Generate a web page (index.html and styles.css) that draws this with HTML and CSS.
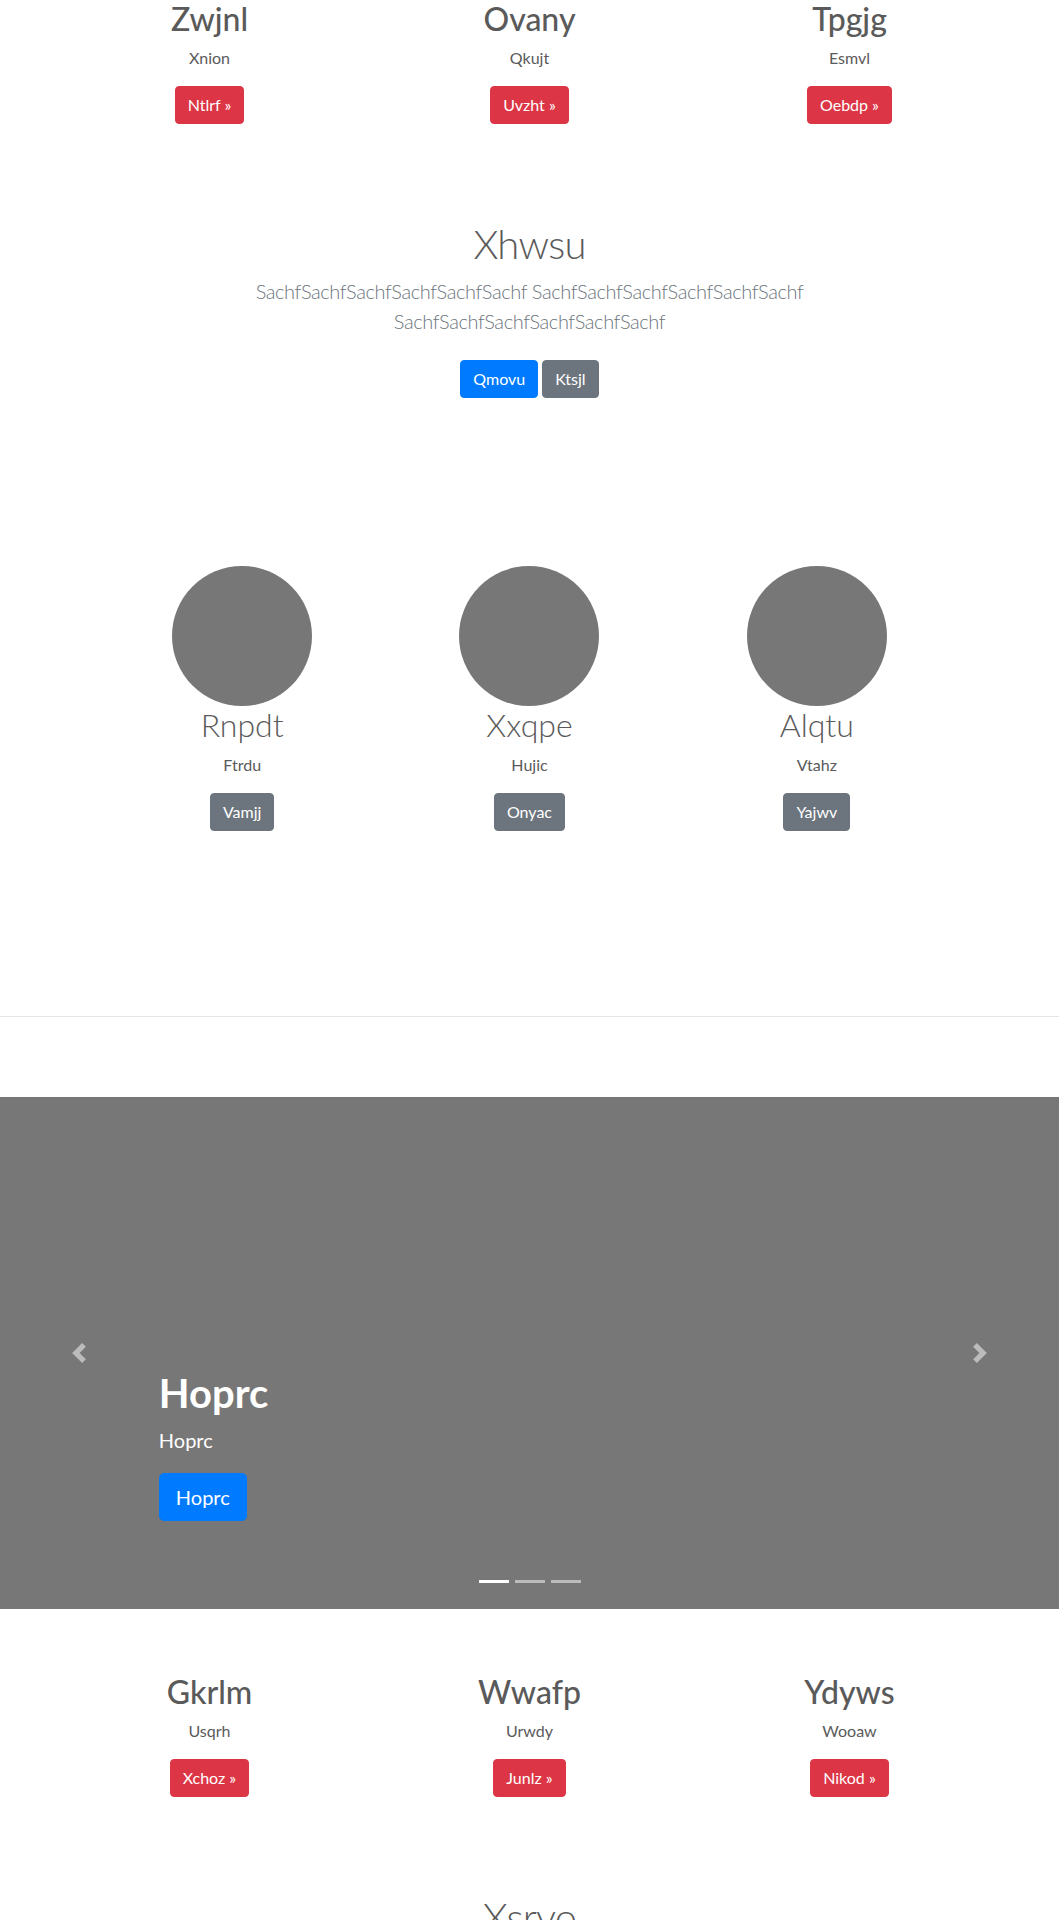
FILE: index.html
```html
<!DOCTYPE html>
<html lang="en">
<head>
<meta charset="utf-8">
<title>Landing</title>
<link rel="stylesheet" href="styles.css">
</head>
<body>
<section class="marketing">
  <div class="feature">
    <h2 class="feature-title">Zwjnl</h2>
    <p class="feature-text">Xnion</p>
    <p class="feature-action"><a class="btn btn-danger" href="#">Ntlrf &raquo;</a></p>
  </div>
  <div class="feature">
    <h2 class="feature-title">Ovany</h2>
    <p class="feature-text">Qkujt</p>
    <p class="feature-action"><a class="btn btn-danger" href="#">Uvzht &raquo;</a></p>
  </div>
  <div class="feature">
    <h2 class="feature-title">Tpgjg</h2>
    <p class="feature-text">Esmvl</p>
    <p class="feature-action"><a class="btn btn-danger" href="#">Oebdp &raquo;</a></p>
  </div>
</section>

<section class="intro">
  <h1 class="intro-title">Xhwsu</h1>
  <p class="intro-lead">SachfSachfSachfSachfSachfSachf SachfSachfSachfSachfSachfSachf SachfSachfSachfSachfSachfSachf</p>
  <p class="intro-actions"><a class="btn btn-primary" href="#">Qmovu</a> <a class="btn btn-secondary" href="#">Ktsjl</a></p>
</section>

<section class="team">
  <div class="member">
    <div class="avatar"></div>
    <h2 class="member-name">Rnpdt</h2>
    <p class="member-text">Ftrdu</p>
    <p class="member-action"><a class="btn btn-secondary" href="#">Vamjj</a></p>
  </div>
  <div class="member">
    <div class="avatar"></div>
    <h2 class="member-name">Xxqpe</h2>
    <p class="member-text">Hujic</p>
    <p class="member-action"><a class="btn btn-secondary" href="#">Onyac</a></p>
  </div>
  <div class="member">
    <div class="avatar"></div>
    <h2 class="member-name">Alqtu</h2>
    <p class="member-text">Vtahz</p>
    <p class="member-action"><a class="btn btn-secondary" href="#">Yajwv</a></p>
  </div>
</section>

<hr class="divider">

<div class="carousel">
  <div class="carousel-caption">
    <h1 class="caption-title">Hoprc</h1>
    <p class="caption-text">Hoprc</p>
    <p class="caption-action"><a class="btn btn-primary btn-lg" href="#">Hoprc</a></p>
  </div>
  <a class="carousel-control carousel-prev" href="#" aria-label="Previous">
    <svg class="control-icon" viewBox="0 0 8 8" width="20" height="20"><path d="M5.25 0l-4 4 4 4 1.5-1.5-2.5-2.5 2.5-2.5-1.5-1.5z"/></svg>
  </a>
  <a class="carousel-control carousel-next" href="#" aria-label="Next">
    <svg class="control-icon" viewBox="0 0 8 8" width="20" height="20"><path d="M2.75 0l-1.5 1.5 2.5 2.5-2.5 2.5 1.5 1.5 4-4-4-4z"/></svg>
  </a>
  <ol class="carousel-indicators">
    <li class="active"></li>
    <li></li>
    <li></li>
  </ol>
</div>

<section class="marketing">
  <div class="feature">
    <h2 class="feature-title">Gkrlm</h2>
    <p class="feature-text">Usqrh</p>
    <p class="feature-action"><a class="btn btn-danger" href="#">Xchoz &raquo;</a></p>
  </div>
  <div class="feature">
    <h2 class="feature-title">Wwafp</h2>
    <p class="feature-text">Urwdy</p>
    <p class="feature-action"><a class="btn btn-danger" href="#">Junlz &raquo;</a></p>
  </div>
  <div class="feature">
    <h2 class="feature-title">Ydyws</h2>
    <p class="feature-text">Wooaw</p>
    <p class="feature-action"><a class="btn btn-danger" href="#">Nikod &raquo;</a></p>
  </div>
</section>

<section class="intro">
  <h1 class="intro-title">Xsrvo</h1>
</section>
</body>
</html>
```

FILE: styles.css
```css
* {
  box-sizing: border-box;
}

body {
  margin: 0;
  font-family: Lato, "Noto Sans", sans-serif;
  font-size: 16px;
  line-height: 1.5;
  color: #5a5a5a;
  background: #fff;
}

h1, h2, p {
  margin: 0;
}

/* Buttons */
.btn {
  display: inline-block;
  padding: 6px 12px;
  font-size: 16px;
  line-height: 1.5;
  font-weight: 400;
  border: 1px solid transparent;
  border-radius: 4px;
  color: #fff;
  text-decoration: none;
  vertical-align: middle;
}

.btn-danger {
  background: #dc3545;
  border-color: #dc3545;
}

.btn-primary {
  background: #007bff;
  border-color: #007bff;
}

.btn-secondary {
  background: #6c757d;
  border-color: #6c757d;
}

.btn-lg {
  padding: 8px 16px;
  font-size: 20px;
  line-height: 1.5;
  border-radius: 5px;
}

/* Marketing rows */
.marketing {
  width: 960px;
  margin: 0 auto;
  display: grid;
  grid-template-columns: repeat(3, 1fr);
}

.feature {
  padding: 0 15px;
  margin-bottom: 24px;
  text-align: center;
}

.feature-title {
  font-size: 32px;
  line-height: 1.2;
  font-weight: 500;
  margin-bottom: 8px;
}

.feature-text,
.feature-action {
  margin-bottom: 16px;
}

/* Intro */
.intro {
  padding: 56px 15px 48px;
  text-align: center;
}

.intro-title {
  font-size: 40px;
  line-height: 1.2;
  font-weight: 300;
  letter-spacing: -0.8px;
  margin-bottom: 8px;
}

.intro-lead {
  max-width: 640px;
  margin: 0 auto 16px;
  font-size: 20px;
  font-weight: 300;
  letter-spacing: -0.4px;
  color: #6c757d;
}

.intro-actions .btn {
  margin: 8px 0;
}

/* Team */
.team {
  width: 862px;
  margin: 0 auto;
  padding-top: 112px;
  display: grid;
  grid-template-columns: repeat(3, 1fr);
}

.member {
  margin-bottom: 24px;
  text-align: center;
}

.avatar {
  width: 140px;
  height: 140px;
  margin: 0 auto;
  border-radius: 50%;
  background: #777;
}

.member-name {
  font-size: 32px;
  line-height: 1.2;
  font-weight: 300;
  margin-bottom: 8px;
}

.member-text,
.member-action {
  margin-bottom: 16px;
}

/* Divider */
.divider {
  height: 0;
  margin: 145px 0 80px;
  border: 0;
  border-top: 1px solid rgba(0, 0, 0, 0.1);
}

/* Carousel */
.carousel {
  position: relative;
  height: 512px;
  margin-bottom: 64px;
  background: #777;
  color: #fff;
  display: flex;
  flex-direction: column;
  justify-content: flex-end;
  padding: 0 15% 88px;
}

.caption-title {
  font-size: 40px;
  line-height: 1.2;
  font-weight: 700;
  margin-bottom: 8px;
}

.caption-text {
  font-size: 20px;
  line-height: 1.5;
  margin-bottom: 18px;
}

.carousel-control {
  position: absolute;
  top: 0;
  bottom: 0;
  width: 15%;
  display: flex;
  align-items: center;
  justify-content: center;
  opacity: 0.5;
}

.carousel-prev {
  left: 0;
}

.carousel-next {
  right: 0;
}

.control-icon {
  display: block;
  fill: #fff;
}

.carousel-indicators {
  position: absolute;
  left: 0;
  right: 0;
  bottom: 0;
  margin: 0 0 16px;
  padding: 0;
  list-style: none;
  display: flex;
  justify-content: center;
}

.carousel-indicators li {
  box-sizing: content-box;
  width: 30px;
  height: 3px;
  margin: 0 3px;
  border-top: 10px solid transparent;
  border-bottom: 10px solid transparent;
  background: #fff;
  background-clip: padding-box;
  opacity: 0.5;
}

.carousel-indicators li.active {
  opacity: 1;
}
```
